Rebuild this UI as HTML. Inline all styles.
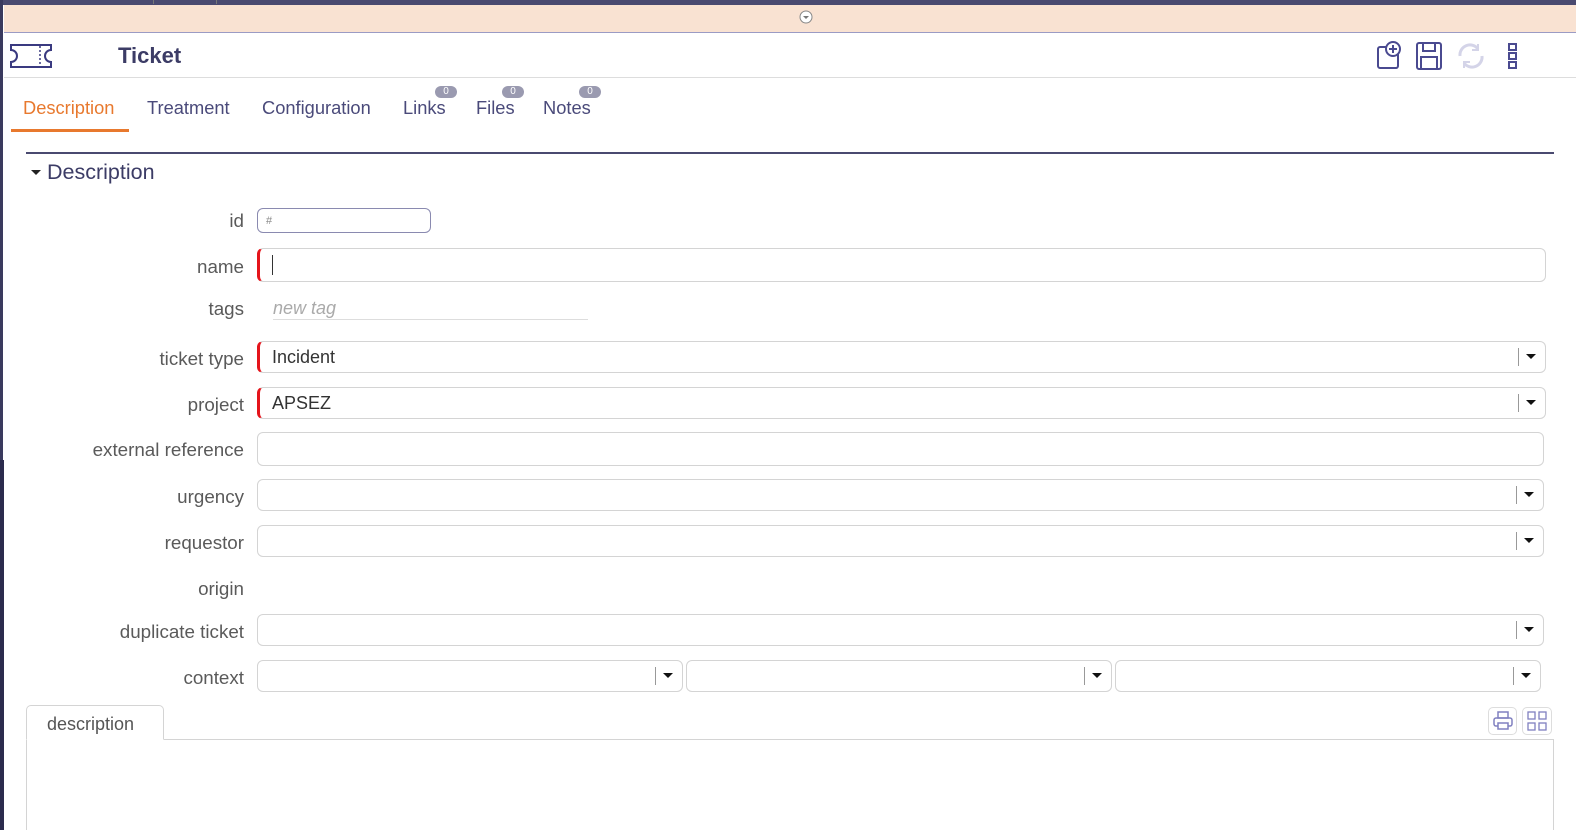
<!DOCTYPE html>
<html><head><meta charset="utf-8"><style>
*{box-sizing:border-box;margin:0;padding:0}
html,body{width:1576px;height:830px;overflow:hidden}
body{background:#fff;font-family:"Liberation Sans",sans-serif;position:relative;color:#555}
.a{position:absolute}
.lbl{position:absolute;right:1332px;font-size:18.8px;color:#5a5a5a;white-space:nowrap}
.inp{position:absolute;border:1px solid #d4d4d4;border-radius:6px;background:#fff;font-size:18px;color:#333;padding-left:12px;display:flex;align-items:center}
.req{border-left:3px solid #e5141b}
.dd{position:absolute;top:6px;bottom:6px;right:26px;border-left:1px solid #999}
.ar{position:absolute;right:9px;top:50%;margin-top:-3px;width:0;height:0;border-left:5px solid transparent;border-right:5px solid transparent;border-top:5px solid #111}
.tab{position:absolute;top:97px;font-size:18.3px;color:#4a4a7a}
.badge{position:absolute;top:86px;width:22px;height:12px;border-radius:6px;background:#9a9ab0;color:#fff;font-size:10px;text-align:center;line-height:12px}
</style></head><body>
<div class="a" style="left:0;top:0;width:1576px;height:5px;background:#4a4a70"></div>
<div class="a" style="left:153px;top:0;width:1px;height:4px;background:#777"></div>
<div class="a" style="left:216px;top:0;width:1px;height:4px;background:#777"></div>
<div class="a" style="left:0;top:0;width:3px;height:460px;background:#3a3a5e"></div>
<div class="a" style="left:0;top:460px;width:4px;height:370px;background:#2b2b4d"></div>
<div class="a" style="left:4px;top:5px;width:1572px;height:28px;background:#f9e2d2;border-bottom:1px solid #9b9bc4"></div>
<svg class="a" style="left:799px;top:10px" width="14" height="14"><circle cx="7" cy="7" r="6" fill="#fff" stroke="#888"/><path d="M4 6h6l-3 3z" fill="#777"/></svg>
<svg class="a" style="left:10px;top:44px" width="42" height="24"><path d="M1 1h40v5a5 5 0 0 0 0 12v5H1v-5a5 5 0 0 0 0-12z" fill="none" stroke="#3a3a80" stroke-width="2"/><path d="M30 2v20" stroke="#3a3a80" stroke-width="1.5" stroke-dasharray="2 2"/></svg>
<div class="a" style="left:118px;top:43px;font-size:22px;font-weight:bold;color:#3c3c66">Ticket</div>
<div class="a" style="left:4px;top:77px;width:1572px;height:1px;background:#ddd"></div>
<svg class="a" style="left:1376px;top:40px" width="28" height="30"><rect x="2" y="7" width="20" height="21" rx="2" fill="none" stroke="#4a4a90" stroke-width="2"/><circle cx="17" cy="9" r="7" fill="#fff" stroke="#4a4a90" stroke-width="2"/><path d="M17 5v8M13 9h8" stroke="#4a4a90" stroke-width="2"/></svg>
<svg class="a" style="left:1416px;top:42px" width="26" height="28"><rect x="1" y="1" width="24" height="26" rx="2" fill="none" stroke="#4a4a90" stroke-width="2"/><rect x="7" y="1" width="12" height="8" fill="none" stroke="#4a4a90" stroke-width="2"/><rect x="5" y="15" width="16" height="12" fill="none" stroke="#4a4a90" stroke-width="2"/></svg>
<svg class="a" style="left:1456px;top:42px" width="30" height="28"><path d="M4 14a10 10 0 0 1 18-7M26 14a10 10 0 0 1-18 7" fill="none" stroke="#d4d4e8" stroke-width="3"/><path d="M22 2v6h-6M8 26v-6h6" fill="none" stroke="#d4d4e8" stroke-width="2"/></svg>
<svg class="a" style="left:1508px;top:43px" width="10" height="26"><rect x="1" y="1" width="7" height="6" fill="none" stroke="#4a4a90" stroke-width="2"/><rect x="1" y="10" width="7" height="6" fill="none" stroke="#4a4a90" stroke-width="2"/><rect x="1" y="19" width="7" height="6" fill="none" stroke="#4a4a90" stroke-width="2"/></svg>
<div class="tab" style="left:23px;color:#e8792e">Description</div>
<div class="a" style="left:11px;top:129px;width:118px;height:3px;background:#e8792e"></div>
<div class="tab" style="left:147px">Treatment</div>
<div class="tab" style="left:262px">Configuration</div>
<div class="tab" style="left:403px">Links</div>
<div class="tab" style="left:476px">Files</div>
<div class="tab" style="left:543px">Notes</div>
<div class="badge" style="left:435px">0</div>
<div class="badge" style="left:502px">0</div>
<div class="badge" style="left:579px">0</div>
<div class="a" style="left:26px;top:152px;width:1528px;height:2px;background:#4a4a70"></div>
<div class="a" style="left:31px;top:170px;width:0;height:0;border-left:5px solid transparent;border-right:5px solid transparent;border-top:5px solid #222"></div>
<div class="a" style="left:47px;top:160px;font-size:21.5px;color:#3c3c66">Description</div>

<div class="lbl" style="top:210px">id</div>
<div class="inp" style="left:257px;top:208px;width:174px;height:25px;border-color:#8a8ab0;font-size:11px;color:#888;padding-left:8px">#</div>
<div class="lbl" style="top:256px">name</div>
<div class="inp req" style="left:257px;top:248px;width:1289px;height:34px"><span style="display:inline-block;width:1px;height:20px;background:#333"></span></div>
<div class="lbl" style="top:298px">tags</div>
<div class="a" style="left:273px;top:298px;font-size:18px;font-style:italic;color:#aaa">new tag</div>
<div class="a" style="left:273px;top:319px;width:315px;height:1px;background:#ddd"></div>
<div class="lbl" style="top:348px">ticket type</div>
<div class="inp req" style="left:257px;top:341px;width:1289px;height:32px">Incident<div class="dd"></div><div class="ar"></div></div>
<div class="lbl" style="top:394px">project</div>
<div class="inp req" style="left:257px;top:387px;width:1289px;height:32px">APSEZ<div class="dd"></div><div class="ar"></div></div>
<div class="lbl" style="top:439px">external reference</div>
<div class="inp" style="left:257px;top:432px;width:1287px;height:34px"></div>
<div class="lbl" style="top:486px">urgency</div>
<div class="inp" style="left:257px;top:479px;width:1287px;height:32px"><div class="dd"></div><div class="ar"></div></div>
<div class="lbl" style="top:532px">requestor</div>
<div class="inp" style="left:257px;top:525px;width:1287px;height:32px"><div class="dd"></div><div class="ar"></div></div>
<div class="lbl" style="top:578px">origin</div>
<div class="lbl" style="top:621px">duplicate ticket</div>
<div class="inp" style="left:257px;top:614px;width:1287px;height:32px"><div class="dd"></div><div class="ar"></div></div>
<div class="lbl" style="top:667px">context</div>
<div class="inp" style="left:257px;top:660px;width:426px;height:32px"><div class="dd"></div><div class="ar"></div></div>
<div class="inp" style="left:686px;top:660px;width:426px;height:32px"><div class="dd"></div><div class="ar"></div></div>
<div class="inp" style="left:1115px;top:660px;width:426px;height:32px"><div class="dd"></div><div class="ar"></div></div>

<div class="a" style="left:26px;top:739px;width:1528px;height:100px;border:1px solid #d4d4d4"></div>
<div class="a" style="left:26px;top:705px;width:138px;height:35px;border:1px solid #d4d4d4;border-bottom:1px solid #fff;border-radius:5px 5px 0 0;background:#fff;font-size:18px;color:#555;padding:8px 0 0 20px">description</div>
<div class="a" style="left:1488px;top:707px;width:29px;height:28px;border:1px solid #ddd;border-radius:5px"></div>
<svg class="a" style="left:1492px;top:711px" width="22" height="20"><rect x="6" y="1" width="10" height="6" fill="none" stroke="#8080c0" stroke-width="1.5"/><rect x="2" y="7" width="18" height="8" rx="2" fill="none" stroke="#8080c0" stroke-width="1.5"/><rect x="6" y="12" width="10" height="6" fill="#fff" stroke="#8080c0" stroke-width="1.5"/></svg>
<div class="a" style="left:1522px;top:707px;width:30px;height:28px;border:1px solid #ddd;border-radius:5px"></div>
<svg class="a" style="left:1527px;top:711px" width="20" height="20"><g fill="none" stroke="#8080c0" stroke-width="1.3"><rect x="1" y="1" width="7" height="7"/><rect x="12" y="1" width="7" height="7"/><rect x="1" y="12" width="7" height="7"/><rect x="12" y="12" width="7" height="7"/></g></svg>
</body></html>
